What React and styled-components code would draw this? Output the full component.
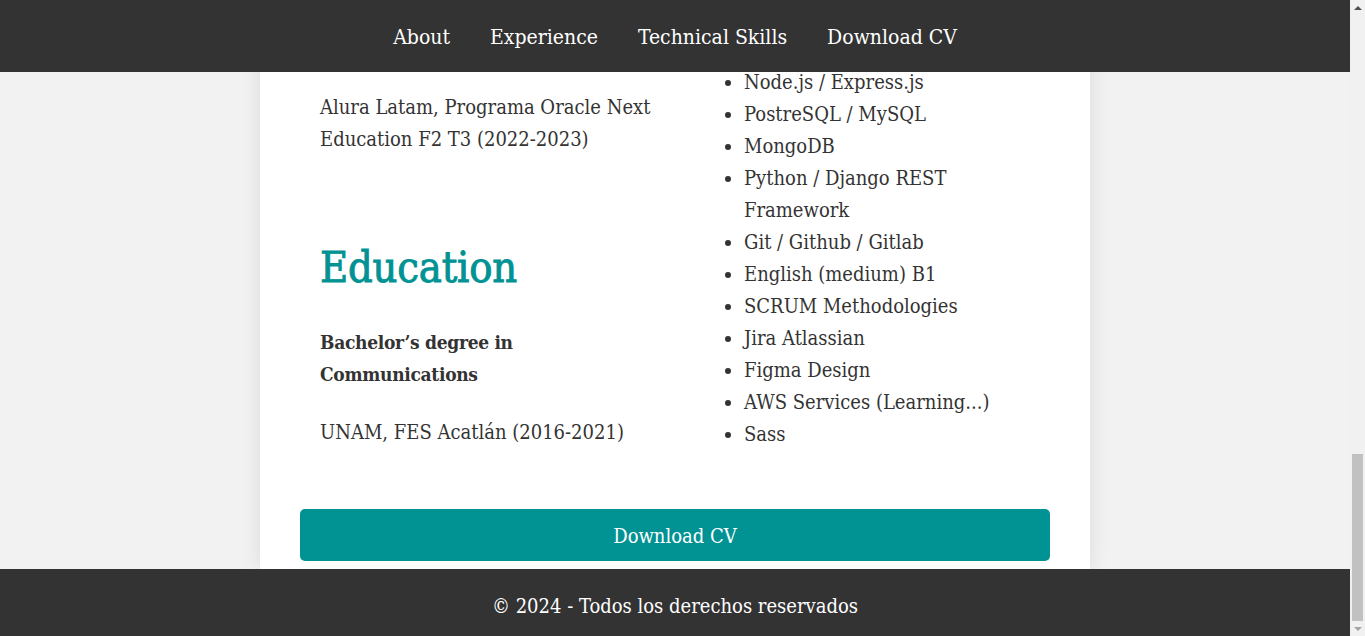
import React, { useLayoutEffect, useRef } from "react";
import styled, { createGlobalStyle } from "styled-components";

const TEAL = "#019294";
const FONT = `"DejaVu Serif Condensed", "DejaVu Serif", serif`;

const GlobalStyle = createGlobalStyle`
  html, body { margin: 0; padding: 0; overflow: hidden; }
  body {
    background: #f2f2f2;
    font-family: ${FONT};
    color: #333;
  }
  * { box-sizing: border-box; }
`;

const Frame = styled.div`
  display: flex;
  height: 100vh;
  overflow: hidden;
`;

const Viewport = styled.div`
  flex: 1;
  min-width: 0;
  height: 100%;
  overflow: hidden;
  background: #f2f2f2;
`;

const ScrollBar = styled.div`
  width: 15px;
  flex: none;
  background: #f1f1f1;
  display: flex;
  flex-direction: column;
`;

const ArrowCell = styled.div`
  height: 15px;
  flex: none;
  display: flex;
  align-items: center;
  justify-content: center;
`;

const Triangle = styled.span`
  width: 0;
  height: 0;
  border-left: 4px solid transparent;
  border-right: 4px solid transparent;
  ${(p) =>
    p.$dir === "up"
      ? `border-bottom: 4px solid ${p.$color};`
      : `border-top: 4px solid ${p.$color};`}
`;

const Track = styled.div`
  flex: 1;
  display: flex;
  flex-direction: column;
  justify-content: flex-end;
  padding: 0 2px;
`;

const Thumb = styled.div`
  height: 167px;
  background: #c1c1c1;
`;

const Header = styled.header`
  position: sticky;
  top: 0;
  height: 72px;
  background: #333;
  display: flex;
  align-items: center;
  justify-content: center;
  padding-top: 2px;
  z-index: 10;
`;

const Nav = styled.nav`
  display: flex;
  gap: 40px;
`;

const NavLink = styled.a`
  color: #fff;
  text-decoration: none;
  font-size: 21px;
  line-height: 1;
`;

const Card = styled.div`
  width: 830px;
  margin: 0 auto;
  background: #fff;
  box-shadow: 0 0 20px rgba(0, 0, 0, 0.1);
  padding: 40px 40px 8px;
`;

const Section = styled.section`
  padding: 0 20px;
  margin-bottom: ${(p) => p.$gap || 80}px;
`;

const Title = styled.h2`
  font-size: 43px;
  line-height: 58px;
  letter-spacing: -0.2px;
  font-weight: 400;
  color: ${TEAL};
  -webkit-text-stroke: 0.9px ${TEAL};
  margin: 0 0 30px;
  white-space: nowrap;
`;

const SubTitle = styled.h3`
  font-size: 19px;
  line-height: 32px;
  letter-spacing: -0.3px;
  font-weight: 700;
  margin: 0 0 26px;
`;

const Text = styled.p`
  font-size: 20px;
  line-height: 32px;
  margin: 0 0 ${(p) => p.$mb ?? 0}px;
`;

const Grid = styled.div`
  display: grid;
  grid-template-columns: 1fr 1fr;
  align-items: end;
`;

const Column = styled.div`
  padding: 0 20px ${(p) => p.$pb || 0}px;
  display: flex;
  flex-direction: column;
  gap: ${(p) => p.$gap || 0}px;
`;

const Block = styled.div``;

const List = styled.ul`
  margin: 0;
  padding-left: 49px;
`;

const Item = styled.li`
  font-size: 20px;
  line-height: 32px;
`;

const DownloadButton = styled.a`
  display: flex;
  align-items: center;
  justify-content: center;
  height: 52px;
  margin-top: 59px;
  padding-top: 2px;
  background: ${TEAL};
  color: #fff;
  border-radius: 5px;
  font-size: 20px;
  text-decoration: none;
`;

const Footer = styled.footer`
  height: 67px;
  background: #333;
  color: #fff;
  display: flex;
  align-items: center;
  justify-content: center;
  padding-top: 6px;
  font-size: 20px;
`;

const skills = [
  "HTML / CSS / JavaScript",
  "React.js / Next.js",
  "Node.js / Express.js",
  "PostreSQL / MySQL",
  "MongoDB",
  "Python / Django REST Framework",
  "Git / Github / Gitlab",
  "English (medium) B1",
  "SCRUM Methodologies",
  "Jira Atlassian",
  "Figma Design",
  "AWS Services (Learning...)",
  "Sass",
];

const jobs = [
  {
    role: "Full Stack Developer",
    place: "Freelance (2023 - Present)",
    text: "Development of web applications with React, Node.js and REST APIs, database design and deployment of services.",
  },
  {
    role: "Front-End Developer",
    place: "Independent projects (2022 - 2023)",
    text: "Creation of responsive interfaces, reusable components and integration with back-end services.",
  },
  {
    role: "Content Editor",
    place: "Communication agency (2019 - 2021)",
    text: "Writing and editing of digital content, coordination with design teams and social media management.",
  },
];

export default function App() {
  const viewRef = useRef(null);

  useLayoutEffect(() => {
    const el = viewRef.current;
    if (el) el.scrollTop = el.scrollHeight;
  }, []);

  return (
    <>
      <GlobalStyle />
      <Frame>
        <Viewport ref={viewRef}>
          <Header>
            <Nav>
              <NavLink href="#about">About</NavLink>
              <NavLink href="#experience">Experience</NavLink>
              <NavLink href="#skills">Technical Skills</NavLink>
              <NavLink href="#cv">Download CV</NavLink>
            </Nav>
          </Header>
          <Card>
            <Section id="about">
              <Title>About</Title>
              <Text $mb={20}>
                Full Stack developer with a background in communications, passionate
                about building useful, accessible and well designed web applications.
              </Text>
              <Text $mb={20}>
                I enjoy working in teams, learning new technologies and solving
                problems with clean and maintainable code.
              </Text>
            </Section>
            <Section id="experience">
              <Title>Experience</Title>
              {jobs.map((j) => (
                <Block key={j.role}>
                  <SubTitle>{j.role}</SubTitle>
                  <Text $mb={10}>{j.place}</Text>
                  <Text $mb={40}>{j.text}</Text>
                </Block>
              ))}
            </Section>
            <Grid id="skills">
              <Column $gap={83} $pb={2}>
                <Block>
                  <Title>Courses</Title>
                  <SubTitle>Oracle Next Education: Back-End Specialization</SubTitle>
                  <Text>Alura Latam, Programa Oracle Next Education F2 T3 (2022-2023)</Text>
                </Block>
                <Block>
                  <Title>Education</Title>
                  <SubTitle>Bachelor’s degree in Communications</SubTitle>
                  <Text>UNAM, FES Acatlán (2016-2021)</Text>
                </Block>
              </Column>
              <Column>
                <Title>Technical Skills</Title>
                <List>
                  {skills.map((s) => (
                    <Item key={s}>{s}</Item>
                  ))}
                </List>
              </Column>
            </Grid>
            <DownloadButton id="cv" href="#cv">Download CV</DownloadButton>
          </Card>
          <Footer>© 2024 - Todos los derechos reservados</Footer>
        </Viewport>
        <ScrollBar>
          <ArrowCell>
            <Triangle $dir="up" $color="#505050" />
          </ArrowCell>
          <Track>
            <Thumb />
          </Track>
          <ArrowCell>
            <Triangle $dir="down" $color="#a3a3a3" />
          </ArrowCell>
        </ScrollBar>
      </Frame>
    </>
  );
}
